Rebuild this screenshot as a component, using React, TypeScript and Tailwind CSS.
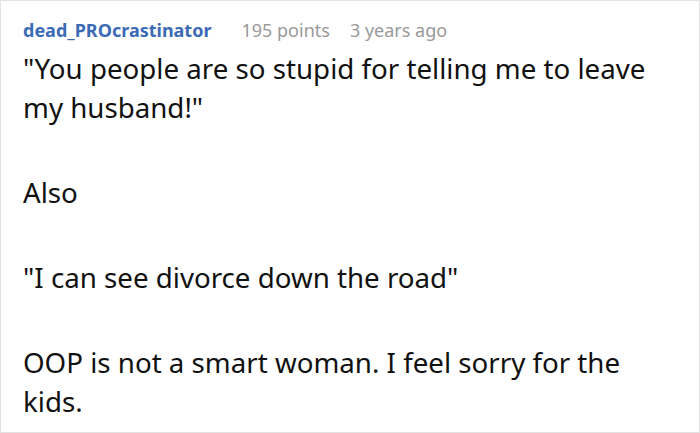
export default function App() {
  return (
    <div className="w-[700px] h-[433px] bg-white border border-[#e2e2e2] overflow-hidden" style={{ fontFamily: '"Noto Sans", sans-serif' }}>
      <div className="px-[22px] pt-[17px]">
        <div className="flex items-baseline text-[18px] leading-[24px]">
          <span className="font-bold text-[#3b6bb5]">dead_PROcrastinator</span>
          <span className="ml-[30px] text-[#999999]">195 points</span>
          <span className="ml-[20px] text-[#999999]">3 years ago</span>
        </div>
        <div className="mt-[7px] text-[27.7px] leading-[39px] text-[#111111]">
          <p>"You people are so stupid for telling me to leave my husband!"</p>
          <p className="mt-[46px]">Also</p>
          <p className="mt-[46px]">"I can see divorce down the road"</p>
          <p className="mt-[46px]">OOP is not a smart woman. I feel sorry for the kids.</p>
        </div>
      </div>
    </div>
  );
}
